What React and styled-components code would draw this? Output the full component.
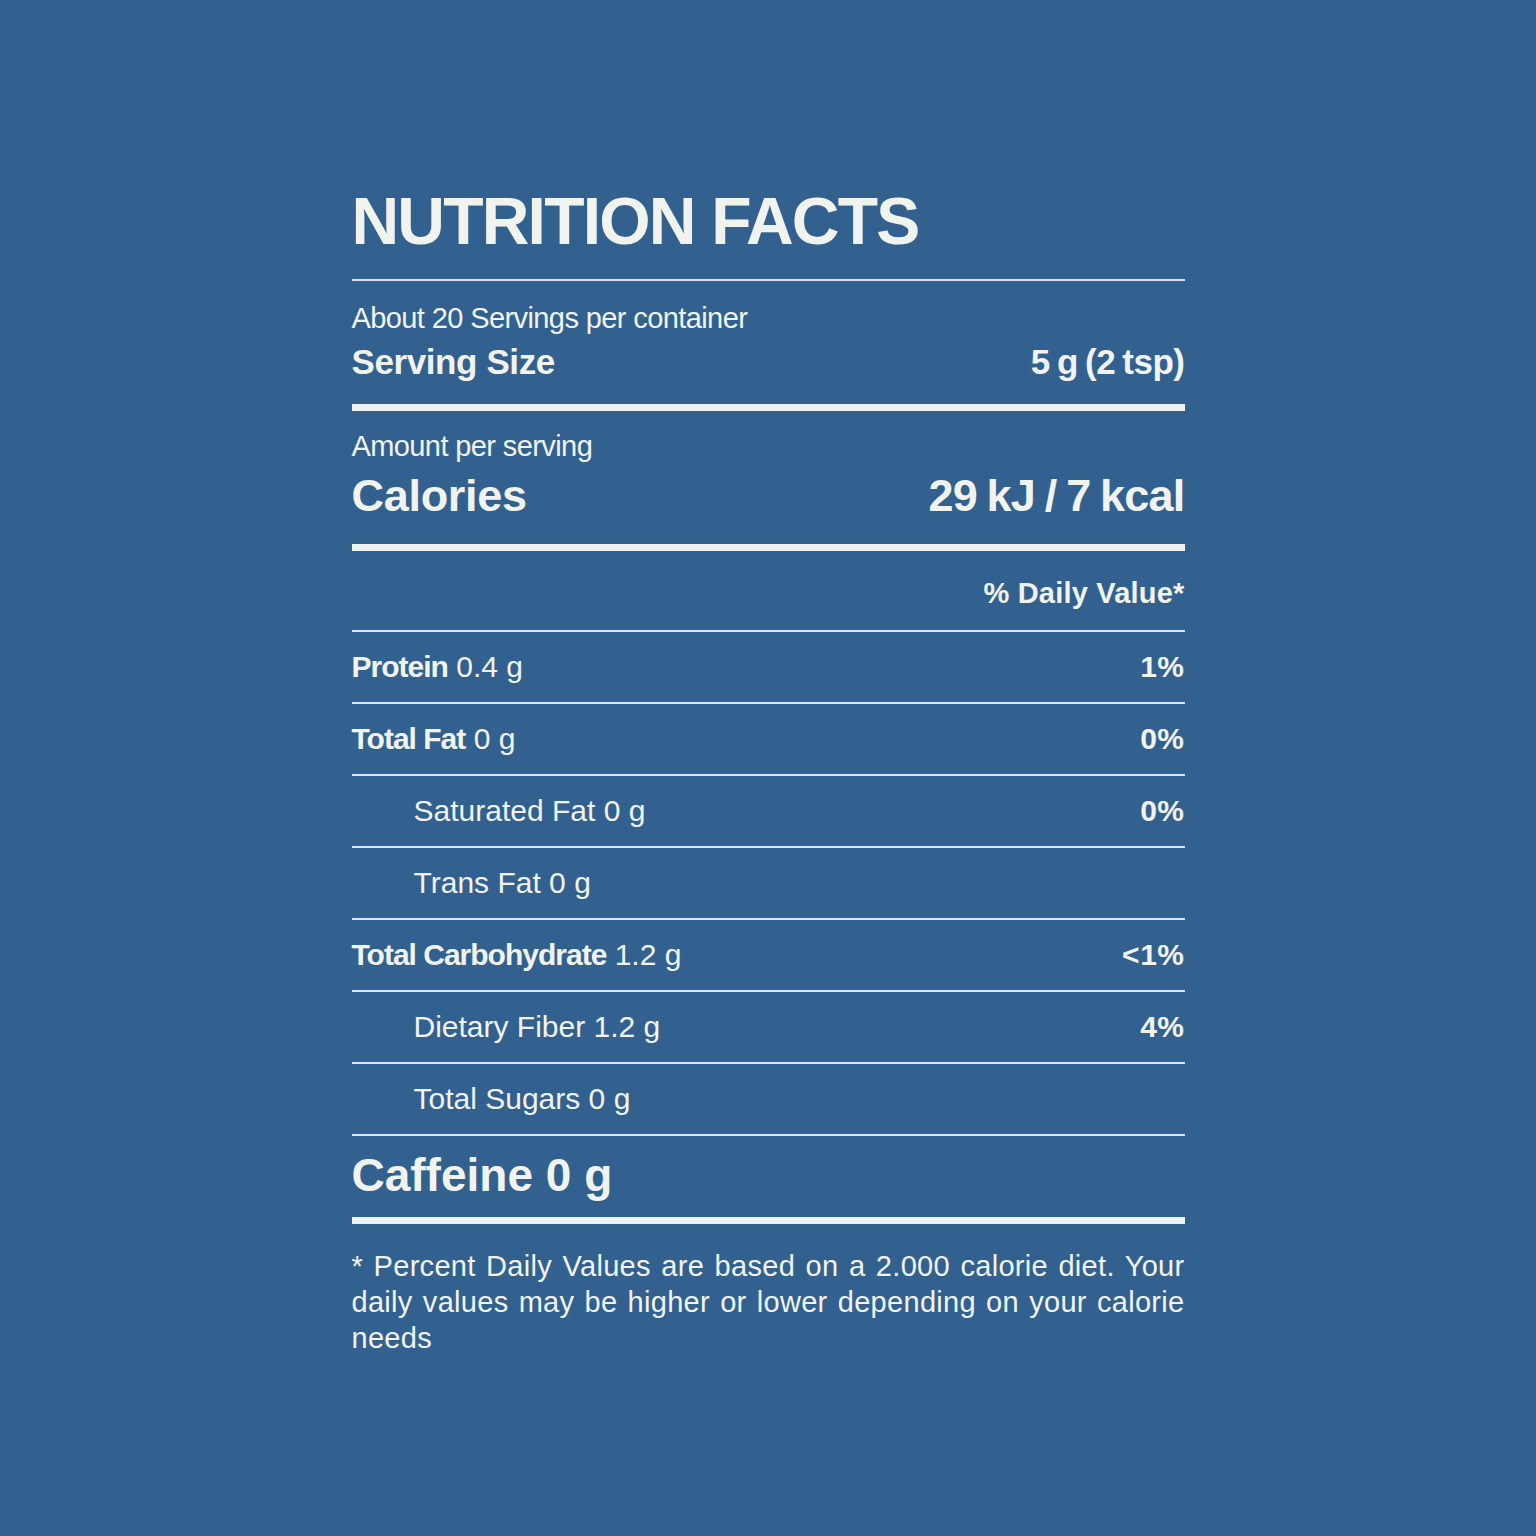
import React from 'react'
import styled, {createGlobalStyle} from 'styled-components'

const Global = createGlobalStyle`
  html, body {
    margin: 0;
    padding: 0;
    background: #33618f;
  }
  body {
    font-family: "Liberation Sans", Arial, sans-serif;
    color: #f1f3ef;
  }
`
const Page = styled.div`
  width: 1536px;
  height: 1536px;
  display: flex;
  justify-content: center;
  background: #33618f;
`
const Label = styled.div`
  width: 833px;
  padding-top: 186px;
  display: flex;
  flex-direction: column;
`
const Title = styled.h1`
  margin: 0 0 23px;
  font-size: 66px;
  line-height: 70px;
  font-weight: 700;
  letter-spacing: -1.8px;
`
const Rule = styled.div`
  height: ${p => p.thick ? 7 : 2}px;
  background: ${p => p.thick ? '#eef2f2' : '#d6e5ef'};
`
const Small = styled.div`
  font-size: 29px;
  line-height: 36px;
  letter-spacing: -0.6px;
  margin-top: ${p => p.top || 0}px;
`
const Line = styled.div`
  display: flex;
  justify-content: space-between;
  align-items: baseline;
  font-weight: 700;
  font-size: ${p => p.size}px;
  line-height: ${p => p.lh}px;
  letter-spacing: ${p => p.ls || 0}px;
  margin-top: ${p => p.top || 0}px;
  margin-bottom: ${p => p.bottom || 0}px;
`
const Value = styled.span`
  word-spacing: ${p => p.ws || 0}px;
  letter-spacing: ${p => p.ls || 0}px;
`
const DailyHead = styled.div`
  height: 79px;
  box-sizing: border-box;
  padding-bottom: 19px;
  display: flex;
  justify-content: flex-end;
  align-items: flex-end;
  font-size: 29px;
  line-height: 36px;
  font-weight: 700;
  letter-spacing: 0.2px;
`
const Row = styled.div`
  height: 72px;
  box-sizing: border-box;
  border-bottom: 2px solid #d6e5ef;
  display: flex;
  justify-content: space-between;
  align-items: center;
  padding-left: ${p => p.indent ? 62 : 0}px;
  font-size: 30px;
`
const Name = styled.span`
  font-weight: ${p => p.bold ? 700 : 400};
  letter-spacing: ${p => p.bold ? -1 : 0}px;
`
const Amount = styled.span`
  font-weight: 400;
`
const Pct = styled.span`
  font-weight: 700;
  letter-spacing: 0.5px;
`
const Footnote = styled.p`
  margin: 24px 0 0;
  font-size: 29px;
  line-height: 36px;
  letter-spacing: 0.3px;
  text-align: justify;
`

const rows = [
  {name: 'Protein', amount: '0.4 g', pct: '1%', bold: true},
  {name: 'Total Fat', amount: '0 g', pct: '0%', bold: true},
  {name: 'Saturated Fat', amount: '0 g', pct: '0%', indent: true},
  {name: 'Trans Fat', amount: '0 g', indent: true},
  {name: 'Total Carbohydrate', amount: '1.2 g', pct: '<1%', bold: true},
  {name: 'Dietary Fiber', amount: '1.2 g', pct: '4%', indent: true},
  {name: 'Total Sugars', amount: '0 g', indent: true},
]

export default function App() {
  return (
    <Page>
      <Global/>
      <Label>
        <Title>NUTRITION FACTS</Title>
        <Rule/>
        <Small top={19}>About 20 Servings per container</Small>
        <Line size={35} lh={44} ls={-0.4} top={4} bottom={20}>
          <span>Serving Size</span>
          <Value ws={-2} ls={-0.5}>5 g (2 tsp)</Value>
        </Line>
        <Rule thick/>
        <Small top={17}>Amount per serving</Small>
        <Line size={45} lh={56} ls={-0.3} top={4} bottom={20}>
          <span>Calories</span>
          <Value ws={-2} ls={-0.8}>29 kJ / 7 kcal</Value>
        </Line>
        <Rule thick/>
        <DailyHead>% Daily Value*</DailyHead>
        <Rule/>
        {rows.map(r => (
          <Row key={r.name} indent={r.indent}>
            <span>
              <Name bold={r.bold}>{r.name}</Name> <Amount>{r.amount}</Amount>
            </span>
            {r.pct && <Pct>{r.pct}</Pct>}
          </Row>
        ))}
        <Line size={46} lh={56} top={11} bottom={14}>
          <span>Caffeine 0 g</span>
        </Line>
        <Rule thick/>
        <Footnote>
          * Percent Daily Values are based on a 2.000 calorie diet. Your daily values may be higher or lower depending on your calorie needs
        </Footnote>
      </Label>
    </Page>
  )
}
